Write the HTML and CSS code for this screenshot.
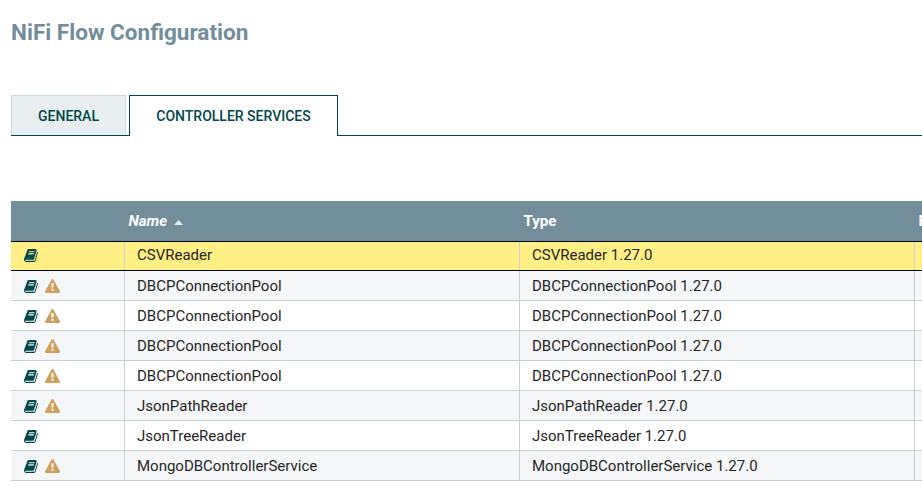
FILE: index.html
```
<!DOCTYPE html>
<html lang="en">
<head>
<meta charset="utf-8">
<title>NiFi Flow Configuration</title>
<link rel="stylesheet" href="styles.css">
</head>
<body>
<svg class="defs" width="0" height="0">
<symbol id="book" viewBox="0 0 1792 1792"><path d="M1639 478q40 57 18 129l-275 906q-19 64-76.5 107.5t-122.5 43.5h-923q-77 0-148.5-53.5t-99.5-131.5q-24-67-2-127 0-4 3-27t4-37q1-8-3-21.5t-3-19.5q2-11 8-21t16.5-23.5 16.5-23.5q23-38 45-91.5t30-91.5q3-10 .5-30t-.5-28q3-11 17-28t17-23q21-36 42-92t25-90q1-9-2.5-32t.5-28q4-13 22-30.5t22-22.5q19-26 42.5-84.5t27.5-96.5q1-8-3-25.5t-2-26.5q2-8 9-18t18-23 17-21q8-12 16.5-30.5t15-35 16-36 19.5-32 26.5-23.5 36-11.5 47.5 5.5l-1 3q38-9 51-9h761q74 0 114 56t18 130l-274 906q-36 119-71.5 153.5t-128.5 34.5h-869q-27 0-38 15-11 16-1 43 24 70 144 70h923q29 0 56-15.5t35-41.5l300-987q7-22 5-57 38 15 59 43zm-1064 2q-4 13 2 22.5t20 9.5h608q13 0 25.5-9.5t16.5-22.5l21-64q4-13-2-22.5t-20-9.5h-608q-13 0-25.5 9.5t-16.5 22.5zm-83 256q-4 13 2 22.5t20 9.5h608q13 0 25.5-9.5t16.5-22.5l21-64q4-13-2-22.5t-20-9.5h-608q-13 0-25.5 9.5t-16.5 22.5z"/></symbol>
<symbol id="warning" viewBox="0 0 1792 1792"><path d="M1024 1375v-190q0-14-9.5-23.5t-22.5-9.5h-192q-13 0-22.5 9.5t-9.5 23.5v190q0 14 9.5 23.5t22.5 9.5h192q13 0 22.5-9.5t9.5-23.5zm-2-374l18-459q0-12-10-19-13-11-24-11h-220q-11 0-24 11-10 7-10 21l17 457q0 10 10 16.5t24 6.5h185q14 0 23.5-6.5t10.5-16.5zm-14-934l768 1408q35 63-2 126-17 29-46.5 46t-63.5 17h-1536q-34 0-63.5-17t-46.5-46q-37-63-2-126l768-1408q17-31 47-49t65-18 65 18 47 49z"/></symbol>
</svg>
<h1 class="title">NiFi Flow Configuration</h1>
<nav class="tabs">
<div class="tab">GENERAL</div>
<div class="tab active">CONTROLLER SERVICES</div>
<div class="tab-line"></div>
</nav>
<main class="grid">
<div class="row head"><div></div><div class="sorted">Name<i class="caret"></i></div><div>Type</div><div>Bundle</div></div>
<div class="row selected"><div class="icons"><svg class="book"><use href="#book"/></svg></div><div>CSVReader</div><div>CSVReader 1.27.0</div><div></div></div>
<div class="row odd"><div class="icons"><svg class="book"><use href="#book"/></svg><svg class="warning"><use href="#warning"/></svg></div><div>DBCPConnectionPool</div><div>DBCPConnectionPool 1.27.0</div><div></div></div>
<div class="row"><div class="icons"><svg class="book"><use href="#book"/></svg><svg class="warning"><use href="#warning"/></svg></div><div>DBCPConnectionPool</div><div>DBCPConnectionPool 1.27.0</div><div></div></div>
<div class="row odd"><div class="icons"><svg class="book"><use href="#book"/></svg><svg class="warning"><use href="#warning"/></svg></div><div>DBCPConnectionPool</div><div>DBCPConnectionPool 1.27.0</div><div></div></div>
<div class="row"><div class="icons"><svg class="book"><use href="#book"/></svg><svg class="warning"><use href="#warning"/></svg></div><div>DBCPConnectionPool</div><div>DBCPConnectionPool 1.27.0</div><div></div></div>
<div class="row odd"><div class="icons"><svg class="book"><use href="#book"/></svg><svg class="warning"><use href="#warning"/></svg></div><div>JsonPathReader</div><div>JsonPathReader 1.27.0</div><div></div></div>
<div class="row"><div class="icons"><svg class="book"><use href="#book"/></svg></div><div>JsonTreeReader</div><div>JsonTreeReader 1.27.0</div><div></div></div>
<div class="row odd"><div class="icons"><svg class="book"><use href="#book"/></svg><svg class="warning"><use href="#warning"/></svg></div><div>MongoDBControllerService</div><div>MongoDBControllerService 1.27.0</div><div></div></div>
</main>
</body>
</html>
```
FILE: styles.css
```
* { box-sizing: border-box; }
body {
  margin: 0;
  padding: 18px 0 0 11px;
  background: #fff;
  color: #262626;
  font: 15px/30px Roboto, sans-serif;
  overflow: hidden;
}
.defs { display: block; height: 0; }
.title {
  margin: 0 0 47px;
  color: #728e9b;
  font-size: 22.55px;
  font-weight: 700;
  line-height: 30px;
}
.tabs {
  display: flex;
  height: 41px;
  color: #004849;
  font-size: 14px;
  font-weight: 500;
  line-height: 41px;
  text-align: center;
  background: linear-gradient(#004849, #004849) left bottom / 118px 1px no-repeat;
}
.tab {
  width: 115px;
  height: 40px;
  margin-right: 3px;
  background: #e9eef0;
  border: 1px solid #ccdadb;
  border-bottom: 0;
}
.tab.active {
  width: 209px;
  height: 41px;
  margin-right: 0;
  background: #fff;
  border-color: #004849;
}
.tab-line { flex: 1; border-bottom: 1px solid #004849; }
.grid { margin-top: 65px; overflow: hidden; }
.row {
  display: grid;
  grid-template-columns: 114px 395px 395px minmax(0, 1fr);
  height: 30px;
  line-height: 30px;
  border-bottom: 1px solid #c7d2d7;
}
.row > div {
  height: 29px;
  padding-left: 12px;
  border-right: 1px solid #c7d2d7;
}
.row > div:last-child {
  padding-left: 0;
  border-right: 0;
  overflow: hidden;
}
.odd { background: #f4f6f7; }
.head {
  height: 40px;
  color: #fff;
  background: #728e9b;
  font-weight: 700;
  line-height: 40px;
  border: 0;
}
.row.head > div {
  height: 40px;
  padding-left: 3.5px;
  border: 0;
}
.sorted { font-style: italic; }
.caret {
  display: inline-block;
  width: 9px;
  height: 5px;
  margin-left: 7px;
  vertical-align: 1px;
  background: #dfedf7;
  clip-path: polygon(50% 0, 100% 100%, 0 100%);
}
.selected {
  background: #ffef85;
  border-top: 1px solid #000;
  border-bottom-color: #000;
  line-height: 27px;
}
.row.selected > div { height: 28px; }
.row .icons {
  display: flex;
  align-items: center;
  gap: 6px;
  padding: 2px 0 0 13px;
}
.row.selected .icons { padding: 0 0 1px 13px; }
.icons svg { width: 15px; height: 15px; }
.book { fill: #004849; }
.warning { fill: #cf9f5d; }
```
